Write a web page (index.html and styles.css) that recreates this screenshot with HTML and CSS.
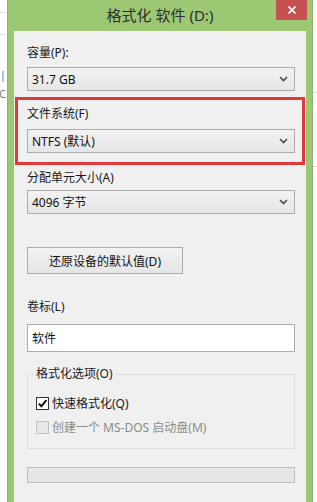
FILE: index.html
```html
<!DOCTYPE html>
<html lang="zh-CN">
<head>
<meta charset="utf-8">
<title>格式化 软件 (D:)</title>
<link rel="stylesheet" href="styles.css">
</head>
<body>
<div class="screen">
  <div class="desk desk-left">
    <span class="tick tick-a"></span>
    <span class="tick tick-b"></span>
    <span class="edge-blue"></span>
    <span class="edge-c">C</span>
  </div>
  <div class="window">
    <div class="titlebar">
      <span class="title">格式化 软件 (D:)</span>
      <button class="close" aria-label="关闭">
        <svg width="8" height="8" viewBox="0 0 8 8"><path d="M0.5 0.5 L7.5 7.5 M7.5 0.5 L0.5 7.5" stroke="#fff" stroke-width="1.6" fill="none"/></svg>
      </button>
    </div>
    <div class="client">
      <div class="label first">容量(P):</div>
      <div class="combo">
        <span>31.7 GB</span>
        <svg class="chev" width="9" height="6" viewBox="0 0 9 6"><path d="M1 1 L4.5 4.5 L8 1" stroke="#4a4a4a" stroke-width="1.6" fill="none"/></svg>
      </div>
      <div class="highlight">
        <div class="label">文件系统(F)</div>
        <div class="combo gap7">
          <span>NTFS (默认)</span>
          <svg class="chev" width="9" height="6" viewBox="0 0 9 6"><path d="M1 1 L4.5 4.5 L8 1" stroke="#4a4a4a" stroke-width="1.6" fill="none"/></svg>
        </div>
      </div>
      <div class="label after-hl">分配单元大小(A)</div>
      <div class="combo gap4">
        <span>4096 字节</span>
        <svg class="chev" width="9" height="6" viewBox="0 0 9 6"><path d="M1 1 L4.5 4.5 L8 1" stroke="#4a4a4a" stroke-width="1.6" fill="none"/></svg>
      </div>
      <button class="btn">还原设备的默认值(D)</button>
      <div class="label after-btn">卷标(L)</div>
      <div class="textbox">软件</div>
      <fieldset class="group">
        <legend>格式化选项(O)</legend>
        <div class="opt opt-1"><span class="check on"><svg width="11" height="11" viewBox="0 0 11 11"><path d="M1.8 5.6 L4.4 8.2 L9.4 2.2" stroke="#111" stroke-width="2" fill="none"/></svg></span><span>快速格式化(Q)</span></div>
        <div class="opt opt-2 disabled"><span class="check off"></span><span>创建一个 MS-DOS 启动盘(M)</span></div>
      </fieldset>
      <div class="progress"></div>
    </div>
  </div>
  <div class="desk desk-right">
    <span class="tick tick-c"></span>
    <span class="tick tick-d"></span>
  </div>
</div>
</body>
</html>
```
FILE: styles.css
```css
html, body {
  margin: 0;
  padding: 0;
  background: #fff;
}

body {
  font-family: "Noto Sans", "Noto Sans CJK SC", sans-serif;
  font-size: 12px;
  color: #1a1a1a;
}

.screen {
  display: flex;
  width: 317px;
  height: 502px;
  overflow: hidden;
  background: #fff;
}

.desk {
  position: relative;
  background: #fff;
}

.desk-left {
  width: 7px;
  flex: none;
}

.desk-right {
  flex: 1;
}

.tick {
  position: absolute;
  height: 1px;
  background: #d8d8d8;
}

.tick-a { top: 12px; left: 0; width: 5px; }
.tick-b { top: 34px; left: 0; width: 5px; }
.tick-c { top: 92px; left: 0; width: 4px; }
.tick-d { top: 166px; left: 0; width: 4px; }

.edge-blue {
  position: absolute;
  top: 71px;
  left: 2px;
  width: 2px;
  height: 11px;
  background: #a9c8e6;
}

.edge-c {
  position: absolute;
  top: 88px;
  left: -1px;
  font-size: 11px;
  line-height: 12px;
  color: #777;
}

.window {
  position: relative;
  width: 306px;
  flex: none;
  box-sizing: border-box;
  background: #9cc874;
  border-left: 1px solid #8db566;
  border-right: 1px solid #93b07a;
  padding: 0 6px;
  display: flex;
  flex-direction: column;
}

.titlebar {
  height: 31px;
  display: flex;
  align-items: center;
  justify-content: center;
  flex: none;
}

.title {
  font-size: 15px;
  line-height: 18px;
  color: #2e2e2e;
  margin-top: -1px;
}

.close {
  position: absolute;
  top: 0;
  right: 5px;
  width: 31px;
  height: 20px;
  border: 0;
  padding: 0;
  margin: 0;
  background: #c75050;
  display: flex;
  align-items: center;
  justify-content: center;
}

.client {
  flex: 1;
  background: #f0f0f0;
  display: flex;
  flex-direction: column;
  align-items: stretch;
  padding: 14px 11px 0 13px;
}

.label {
  font-size: 12px;
  line-height: 16px;
  color: #1a1a1a;
  white-space: nowrap;
}

.combo {
  margin-top: 6px;
  height: 24px;
  box-sizing: border-box;
  border: 1px solid #adadad;
  background: linear-gradient(#f2f2f2, #e6e6e6);
  display: flex;
  align-items: center;
  justify-content: space-between;
  padding: 0 4px 0 4px;
  font-size: 12px;
  color: #111;
}

.combo .chev {
  margin-right: 2px;
}

.combo.gap7 { margin-top: 7px; }
.combo.gap4 { margin-top: 4px; }

.highlight {
  margin: 6px -10px 0 -12px;
  border: 3px solid #e0393b;
  padding: 6px 7px 9px 9px;
  display: flex;
  flex-direction: column;
}

.label.after-hl { margin-top: 5px; }

.btn {
  align-self: flex-start;
  margin-top: 33px;
  width: 156px;
  height: 27px;
  box-sizing: border-box;
  border: 1px solid #adadad;
  background: linear-gradient(#f2f2f2, #e5e5e5);
  font-family: inherit;
  font-size: 12px;
  color: #111;
  padding: 0;
}

.label.after-btn { margin-top: 25px; }

.textbox {
  margin-top: 9px;
  height: 28px;
  box-sizing: border-box;
  border: 1px solid #abadb3;
  background: #fff;
  display: flex;
  align-items: center;
  padding-left: 4px;
  font-size: 12px;
  color: #111;
}

.group {
  margin: 14px 0 0;
  border: 1px solid #dcdcdc;
  padding: 0 8px 13px 8px;
  min-width: 0;
}

.group legend {
  padding: 0 2px;
  margin-left: -2px;
  font-size: 12px;
  line-height: 16px;
  color: #1a1a1a;
}

.opt {
  display: flex;
  align-items: center;
  height: 16px;
  gap: 3px;
  font-size: 12px;
  color: #1a1a1a;
  white-space: nowrap;
}

.opt-1 { margin-top: 13px; }
.opt-2 { margin-top: 8px; }

.opt.disabled { color: #8c8c8c; }

.check {
  width: 13px;
  height: 13px;
  box-sizing: border-box;
  flex: none;
  display: flex;
  align-items: center;
  justify-content: center;
}

.check.on {
  border: 1px solid #333;
  background: #fff;
}

.check.off {
  border: 1px solid #c4c4c4;
  background: #e8e8e8;
}

.progress {
  margin-top: 18px;
  height: 16px;
  box-sizing: border-box;
  border: 1px solid #bcbcbc;
  background: #e6e6e6;
}
```
